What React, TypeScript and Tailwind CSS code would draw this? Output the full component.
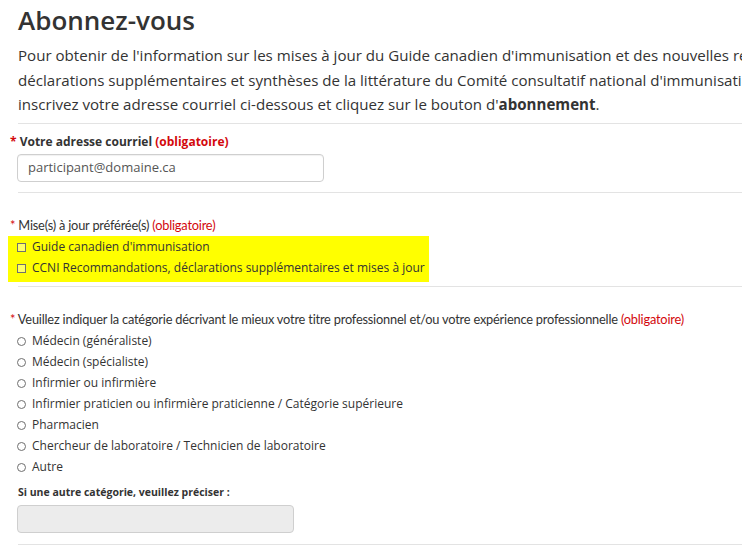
const radios = [
  "Médecin (généraliste)",
  "Médecin (spécialiste)",
  "Infirmier ou infirmière",
  "Infirmier praticien ou infirmière praticienne / Catégorie supérieure",
  "Pharmacien",
  "Chercheur de laboratoire / Technicien de laboratoire",
  "Autre",
];

const checks = [
  "Guide canadien d'immunisation",
  "CCNI Recommandations, déclarations supplémentaires et mises à jour",
];

function Req() {
  return <span className="text-[#d3080c]">(obligatoire)</span>;
}

export default function App() {
  return (
    <div className="h-[545px] w-[742px] overflow-hidden bg-white font-['Open_Sans',sans-serif] text-[#333]">
      <div className="w-[1000px] pl-[18px]">
        <h1 className="pt-[2px] text-[26px] font-semibold leading-[36px] text-[#333]">Abonnez-vous</h1>
        <p className="mt-[5px] whitespace-nowrap text-[15.1px] leading-[24.5px]">
          Pour obtenir de l'information sur les mises à jour du Guide canadien d'immunisation et des nouvelles recommandations,
          <br />
          déclarations supplémentaires et synthèses de la littérature du Comité consultatif national d'immunisation (CCNI),
          <br />
          inscrivez votre adresse courriel ci-dessous et cliquez sur le bouton d'<b className="font-bold">abonnement</b>.
        </p>
        <hr className="mt-[6px] border-t border-[#e3e3e3]" />

        <div className="-ml-[8px] pt-[9px] text-[12px] font-bold leading-[18px]">
          <span className="text-[#d3080c]">*</span> Votre adresse courriel <Req />
        </div>
        <div className="mt-[3px] -ml-px flex h-[28px] w-[307px] items-center rounded-[4px] border border-[#cfcfcf] px-[10px] text-[13px] text-[#555] shadow-[inset_0_1px_1px_rgba(0,0,0,0.06)]">
          participant@domaine.ca
        </div>
        <hr className="mt-[10px] border-t border-[#e3e3e3]" />

        <div className="-ml-[8px] pt-[23px] font-['Lato',sans-serif] text-[12.8px] leading-[18px] tracking-[-0.2px]">
          <span className="text-[#d3080c]">*</span> Mise(s) à jour préférée(s) <Req />
        </div>
        <div className="-ml-[10px] mt-[2px] w-[421px] bg-[#ffff00] pb-[3px] pl-[10px] pt-[1px]">
          {checks.map((c) => (
            <div key={c} className="flex h-[21px] items-center gap-[6px] text-[12px]">
              <span className="-ml-px h-[9px] w-[9px] border border-[#6f6f6f] bg-white/40" />
              <span>{c}</span>
            </div>
          ))}
        </div>
        <hr className="mt-[4px] border-t border-[#e3e3e3]" />

        <div className="-ml-[8px] pt-[23px] font-['Lato',sans-serif] text-[12.8px] leading-[18px] tracking-[-0.2px]">
          <span className="text-[#d3080c]">*</span> Veuillez indiquer la catégorie décrivant le mieux votre titre professionnel
          et/ou votre expérience professionnelle <Req />
        </div>
        <div className="mt-[3px]">
          {radios.map((r) => (
            <div key={r} className="flex h-[21px] items-center gap-[6px] text-[12px]">
              <span className="-ml-px h-[9px] w-[9px] rounded-full border border-[#6f6f6f]" />
              <span>{r}</span>
            </div>
          ))}
        </div>

        <div className="pt-[6px] text-[10.5px] font-bold leading-[16px]">Si une autre catégorie, veuillez préciser :</div>
        <div className="-ml-px mt-[5px] h-[28px] w-[277px] rounded-[4px] border border-[#cfcfcf] bg-[#ececec]" />
        <hr className="mt-[11px] border-t border-[#e3e3e3]" />
      </div>
    </div>
  );
}
